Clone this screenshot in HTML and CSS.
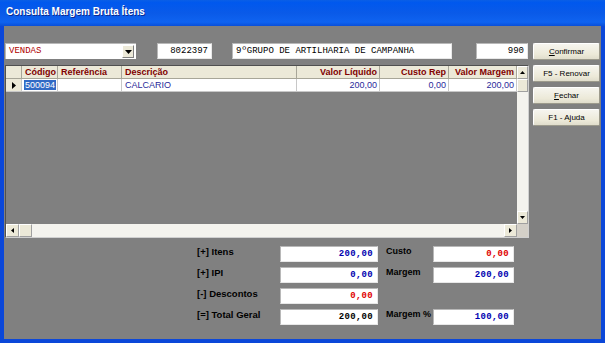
FILE: index.html
```html
<!DOCTYPE html>
<html lang="pt-BR">

<head>
    <meta charset="UTF-8">
    <meta name="viewport" content="width=device-width, initial-scale=1.0">
    <title>Consulta Margem Bruta Ítens</title>
    <link rel="stylesheet" href="styles.css">
</head>

<body>
    <div class="window">
        <div class="titlebar">Consulta Margem Bruta Ítens</div>
        <div class="frame">
            <div class="main">
                <div class="toprow">
                    <div class="combo">
                        <span class="comboText">VENDAS</span>
                        <span class="comboBtn">
                            <svg width="7" height="4" viewBox="0 0 7 4"><path d="M0 0h7L3.5 4z" fill="#000"/></svg>
                        </span>
                    </div>
                    <div class="field num wCode">8022397</div>
                    <div class="field wDesc">9ºGRUPO DE ARTILHARIA DE CAMPANHA</div>
                    <div class="field num wQty">990</div>
                </div>

                <div class="dataGrid">
                    <div class="cells">
                        <div class="gridRow head">
                            <div></div>
                            <div class="c">Código</div>
                            <div>Referência</div>
                            <div>Descrição</div>
                            <div class="r">Valor Líquido</div>
                            <div class="r">Custo Rep</div>
                            <div class="r">Valor Margem</div>
                        </div>
                        <div class="gridRow data">
                            <div class="indicator">
                                <svg width="4" height="7" viewBox="0 0 4 7"><path d="M0 0l4 3.5L0 7z" fill="#000"/></svg>
                            </div>
                            <div class="r"><span class="selected">500094</span></div>
                            <div></div>
                            <div>CALCARIO</div>
                            <div class="r">200,00</div>
                            <div class="r">0,00</div>
                            <div class="r">200,00</div>
                        </div>
                    </div>
                    <div class="vscroll">
                        <div class="sbBtn">
                            <svg width="5" height="3" viewBox="0 0 5 3"><path d="M0 3h5L2.5 0z" fill="#000"/></svg>
                        </div>
                        <div class="sbBtn"></div>
                        <div class="track"></div>
                        <div class="sbBtn">
                            <svg width="5" height="3" viewBox="0 0 5 3"><path d="M0 0h5L2.5 3z" fill="#000"/></svg>
                        </div>
                    </div>
                    <div class="hscroll">
                        <div class="sbBtn">
                            <svg width="3" height="5" viewBox="0 0 3 5"><path d="M3 0v5L0 2.5z" fill="#000"/></svg>
                        </div>
                        <div class="sbBtn"></div>
                        <div class="track"></div>
                        <div class="sbBtn">
                            <svg width="3" height="5" viewBox="0 0 3 5"><path d="M0 0v5L3 2.5z" fill="#000"/></svg>
                        </div>
                    </div>
                    <div class="corner"></div>
                </div>

                <div class="totals">
                    <div class="lbl">[+] Itens</div>
                    <div class="field tot blue">200,00</div>
                    <div class="lbl lbl2">Custo</div>
                    <div class="field tot red">0,00</div>

                    <div class="lbl">[+] IPI</div>
                    <div class="field tot blue">0,00</div>
                    <div class="lbl lbl2">Margem</div>
                    <div class="field tot blue">200,00</div>

                    <div class="lbl">[-] Descontos</div>
                    <div class="field tot red">0,00</div>
                    <div></div>
                    <div></div>

                    <div class="lbl">[=] Total Geral</div>
                    <div class="field tot">200,00</div>
                    <div class="lbl lbl2">Margem %</div>
                    <div class="field tot blue">100,00</div>
                </div>
            </div>

            <div class="buttons">
                <button class="btn"><u>C</u>onfirmar</button>
                <button class="btn">F5 - Renovar</button>
                <button class="btn"><u>F</u>echar</button>
                <button class="btn">F1 - Ajuda</button>
            </div>
        </div>
    </div>
</body>

</html>
```

FILE: styles.css
```css
body {
    margin: 0;
    background-color: #808080;
    font-family: "Liberation Sans", Arial, sans-serif;
}

.window {
    width: 605px;
    height: 343px;
    display: flex;
    flex-direction: column;
}

.titlebar {
    height: 26px;
    box-sizing: border-box;
    padding: 6px 0 0 6px;
    color: #ffffff;
    font-size: 10px;
    font-weight: bold;
    text-shadow: 1px 1px 0 #0a2a90;
    background: linear-gradient(#0a5fe6 0%, #0058ee 10%, #0a5ae8 50%, #0f63f0 85%, #0a4fd8 100%);
}

.frame {
    flex: 1;
    display: flex;
    box-sizing: border-box;
    border: 4px solid #0b47d9;
    border-top: none;
    padding: 17px 0 0 1px;
    background-color: #808080;
}

.main {
    width: 524px;
}

/* ---- linha de campos superior ---- */
.toprow {
    display: flex;
    height: 16px;
}

.field {
    box-sizing: border-box;
    height: 16px;
    background: #ffffff;
    border-top: 1px solid #b8b8b8;
    border-left: 1px solid #b8b8b8;
    border-bottom: 1px solid #e8e8e8;
    border-right: 1px solid #e8e8e8;
    font-family: "Liberation Mono", "Courier New", monospace;
    font-size: 9px;
    line-height: 14px;
    padding: 0 3px;
    white-space: nowrap;
    overflow: hidden;
}

.num {
    text-align: right;
}

.combo {
    box-sizing: border-box;
    width: 131px;
    height: 16px;
    background: #ffffff;
    border-top: 1px solid #b8b8b8;
    border-left: 1px solid #b8b8b8;
    display: flex;
    justify-content: space-between;
    padding: 1px 2px 1px 3px;
}

.comboText {
    color: #b00000;
    font-family: "Liberation Mono", "Courier New", monospace;
    font-size: 9px;
    line-height: 13px;
}

.comboBtn {
    width: 12px;
    height: 13px;
    box-sizing: border-box;
    background: #ece9d8;
    border: 1px solid;
    border-color: #ffffff #808080 #808080 #ffffff;
    display: flex;
    align-items: center;
    justify-content: center;
}

.wCode {
    width: 55px;
    margin-left: 21px;
}

.wDesc {
    width: 220px;
    margin-left: 20px;
}

.wQty {
    width: 52px;
    margin-left: 24px;
}

/* ---- grade ---- */
.dataGrid {
    margin-top: 6px;
    height: 173px;
    box-sizing: border-box;
    border: 1px solid;
    border-color: #505050 #d0d0d0 #d0d0d0 #505050;
    display: grid;
    grid-template-columns: 1fr 11px;
    grid-template-rows: 1fr 13px;
}

.gridRow {
    display: grid;
    grid-template-columns: 16px 36px 64px 175px 83px 69px 68px;
    height: 13px;
    font-size: 9px;
    line-height: 12px;
}

.gridRow>div {
    box-sizing: border-box;
    padding: 0 3px;
    white-space: nowrap;
    overflow: hidden;
}

.gridRow .r {
    text-align: right;
    padding: 0 2px;
}

.gridRow .c {
    text-align: center;
}

.head {
    background: #ece9d8;
    color: #800000;
    font-weight: bold;
}

.head>div {
    border-right: 1px solid #a8a698;
    border-bottom: 1px solid #a8a698;
}

.data {
    background: #ffffff;
    color: #2a2a9a;
}

.data>div {
    border-right: 1px solid #c8c8c8;
    border-bottom: 1px solid #c8c8c8;
}

.data .indicator {
    background: #ece9d8;
    display: flex;
    align-items: center;
    justify-content: center;
}

.selected {
    background: #316ac5;
    color: #ffffff;
    padding: 0 1px;
}

.vscroll {
    display: flex;
    flex-direction: column;
    background: #f4f3ee;
}

.hscroll {
    display: flex;
    background: #f4f3ee;
}

.track {
    flex: 1;
}

.sbBtn {
    width: 11px;
    height: 13px;
    flex-shrink: 0;
    box-sizing: border-box;
    background: #ece9d8;
    border: 1px solid;
    border-color: #ffffff #a0a0a0 #a0a0a0 #ffffff;
    display: flex;
    align-items: center;
    justify-content: center;
}

.hscroll .sbBtn {
    width: 13px;
    height: 13px;
}

.corner {
    background: #d4d0c8;
}

/* ---- totais ---- */
.totals {
    margin: 8px 0 0 192px;
    display: grid;
    grid-template-columns: 83px 98px 55px 81px;
    grid-template-rows: repeat(4, 16px);
    row-gap: 5px;
}

.lbl {
    font-size: 9.5px;
    font-weight: bold;
    color: #000000;
    line-height: 11px;
    white-space: nowrap;
}

.lbl2 {
    padding-left: 8px;
    font-size: 9px;
}

.tot {
    text-align: right;
    font-weight: bold;
    padding: 0 4px;
    letter-spacing: 0.3px;
}

.blue {
    color: #0000b0;
}

.red {
    color: #e00000;
}

/* ---- botões ---- */
.buttons {
    margin-left: 4px;
    width: 67px;
    display: flex;
    flex-direction: column;
    gap: 5px;
}

.btn {
    height: 17px;
    padding: 0;
    background: linear-gradient(#f6f5ef, #ece9d8 70%, #e0ddcc);
    border: 1px solid;
    border-color: #ffffff #9c9a8c #9c9a8c #ffffff;
    border-radius: 2px;
    font-family: "Liberation Sans", Arial, sans-serif;
    font-size: 8px;
    color: #000000;
}
```
